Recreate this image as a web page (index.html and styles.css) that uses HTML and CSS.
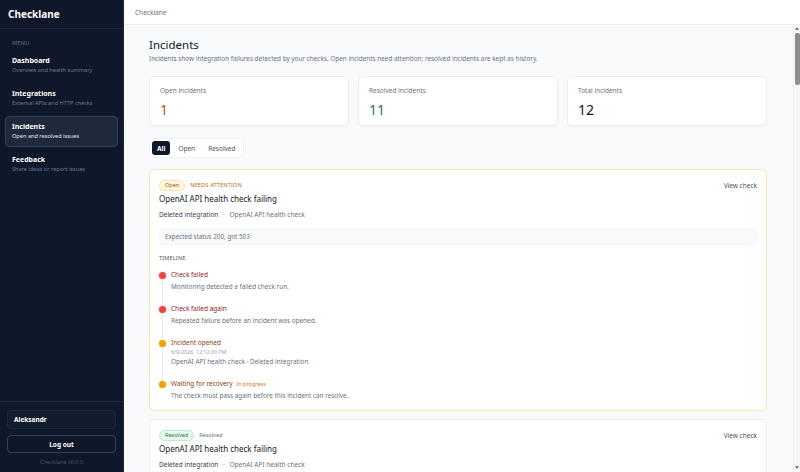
FILE: index.html
```html
<!DOCTYPE html>
<html lang="en">
<head>
    <meta charset="UTF-8">
    <meta name="viewport" content="width=device-width, initial-scale=1.0">
    <title>Incidents - Checklane</title>
    <link rel="stylesheet" href="styles.css">
</head>
<body>
    <aside class="sidebar">
        <div class="brand">Checklane</div>
        <div class="menu-label">MENU</div>
        <nav class="nav">
            <a class="nav-item" href="#">
                <span class="nav-title">Dashboard</span>
                <span class="nav-sub">Overview and health summary</span>
            </a>
            <a class="nav-item" href="#">
                <span class="nav-title">Integrations</span>
                <span class="nav-sub">External APIs and HTTP checks</span>
            </a>
            <a class="nav-item active" href="#">
                <span class="nav-title">Incidents</span>
                <span class="nav-sub">Open and resolved issues</span>
            </a>
            <a class="nav-item" href="#">
                <span class="nav-title">Feedback</span>
                <span class="nav-sub">Share ideas or report issues</span>
            </a>
        </nav>
        <div class="sidebar-footer">
            <div class="user-box">Aleksandr</div>
            <button class="logout-btn">Log out</button>
            <div class="version">Checklane v0.0.0</div>
        </div>
    </aside>

    <div class="main">
        <header class="topbar">Checklane</header>
        <main class="content">
            <h1>Incidents</h1>
            <p class="page-desc">Incidents show integration failures detected by your checks. Open incidents need attention; resolved incidents are kept as history.</p>

            <div class="stats">
                <div class="stat-card">
                    <div class="stat-label">Open incidents</div>
                    <div class="stat-value open">1</div>
                </div>
                <div class="stat-card">
                    <div class="stat-label">Resolved incidents</div>
                    <div class="stat-value resolved">11</div>
                </div>
                <div class="stat-card">
                    <div class="stat-label">Total incidents</div>
                    <div class="stat-value">12</div>
                </div>
            </div>

            <div class="tabs">
                <button class="tab active">All</button>
                <button class="tab">Open</button>
                <button class="tab">Resolved</button>
            </div>

            <div class="incident incident-open">
                <div class="incident-head">
                    <div class="badges">
                        <span class="badge badge-open">Open</span>
                        <span class="attention">NEEDS ATTENTION</span>
                    </div>
                    <a class="view-link" href="#">View check</a>
                </div>
                <div class="incident-title">OpenAI API health check failing</div>
                <div class="incident-meta"><strong>Deleted integration</strong> <span class="sep">·</span> OpenAI API health check</div>
                <div class="error-box">Expected status 200, got 503</div>

                <div class="timeline-label">TIMELINE</div>
                <ul class="timeline">
                    <li class="event fail">
                        <div class="event-title">Check failed</div>
                        <div class="event-desc">Monitoring detected a failed check run.</div>
                    </li>
                    <li class="event fail">
                        <div class="event-title">Check failed again</div>
                        <div class="event-desc">Repeated failure before an incident was opened.</div>
                    </li>
                    <li class="event warn">
                        <div class="event-title">Incident opened</div>
                        <div class="event-date">6/9/2026, 12:12:00 PM</div>
                        <div class="event-desc">OpenAI API health check · Deleted integration</div>
                    </li>
                    <li class="event warn">
                        <div class="event-title">Waiting for recovery <span class="progress">In progress</span></div>
                        <div class="event-desc">The check must pass again before this incident can resolve.</div>
                    </li>
                </ul>
            </div>

            <div class="incident">
                <div class="incident-head">
                    <div class="badges">
                        <span class="badge badge-resolved">Resolved</span>
                        <span class="resolved-note">Resolved</span>
                    </div>
                    <a class="view-link" href="#">View check</a>
                </div>
                <div class="incident-title">OpenAI API health check failing</div>
                <div class="incident-meta"><strong>Deleted integration</strong> <span class="sep">·</span> OpenAI API health check</div>
            </div>
        </main>
        <div class="scrollbar">
            <span class="scroll-arrow up"></span>
            <div class="scroll-thumb"></div>
            <span class="scroll-arrow down"></span>
        </div>
    </div>
</body>
</html>
```

FILE: styles.css
```css
* {
    box-sizing: border-box;
}

html, body {
    height: 100%;
}

body {
    margin: 0;
    display: flex;
    font-family: 'Noto Sans', sans-serif;
    background-color: #f8fafc;
    color: #111827;
    overflow: hidden;
}

/* Sidebar */
.sidebar {
    width: 124px;
    flex-shrink: 0;
    background-color: #0f172a;
    border-right: 1px solid #1e293b;
    color: #fff;
    display: flex;
    flex-direction: column;
}

.brand {
    height: 29px;
    padding: 0 8px;
    display: flex;
    align-items: center;
    font-size: 10px;
    font-weight: 700;
    border-bottom: 1px solid #1e293b;
}

.menu-label {
    padding: 10px 12px 0;
    font-size: 5.5px;
    line-height: 8px;
    letter-spacing: 0.3px;
    color: #64748b;
    margin-bottom: 3px;
}

.nav {
    display: flex;
    flex-direction: column;
    gap: 2px;
    padding: 0 5px;
}

.nav-item {
    display: flex;
    flex-direction: column;
    padding: 5px 6px;
    border: 1px solid transparent;
    border-radius: 4px;
    text-decoration: none;
    color: #fff;
}

.nav-item.active {
    background-color: #1e293b;
    border-color: #334155;
}

.nav-title {
    font-size: 7px;
    line-height: 10px;
    font-weight: 700;
}

.nav-sub {
    font-size: 5.6px;
    line-height: 9px;
    color: #6b7a90;
}

.nav-item.active .nav-sub {
    color: #e2e8f0;
}

.sidebar-footer {
    margin-top: auto;
    border-top: 1px solid #1e293b;
    padding: 8px 7px 5px;
    display: flex;
    flex-direction: column;
    gap: 6px;
}

.user-box {
    height: 19px;
    padding: 0 6px;
    display: flex;
    align-items: center;
    border: 1px solid #1e293b;
    border-radius: 4px;
    background-color: #111c30;
    font-size: 6.5px;
    font-weight: 700;
}

.logout-btn {
    height: 18px;
    border: 1px solid #334155;
    border-radius: 4px;
    background-color: #0f172a;
    color: #fff;
    font-family: inherit;
    font-size: 6.5px;
    font-weight: 700;
    cursor: pointer;
}

.version {
    text-align: center;
    font-size: 5.5px;
    line-height: 9px;
    color: #475569;
    margin-top: -1px;
}

/* Main */
.main {
    flex: 1;
    display: flex;
    flex-direction: column;
    min-width: 0;
    position: relative;
}

.topbar {
    height: 25px;
    flex-shrink: 0;
    padding: 0 11px;
    display: flex;
    align-items: center;
    background-color: #fff;
    border-bottom: 1px solid #eef0f3;
    font-size: 6.5px;
    color: #6b7280;
}

.content {
    flex: 1;
    overflow: hidden;
    padding: 12px 33px 20px 25px;
}

/* drawn scrollbar, the real one is hidden in screenshots */
.scrollbar {
    position: absolute;
    top: 25px;
    right: 0;
    bottom: 0;
    width: 7px;
    background-color: #f6f6f6;
    border-left: 1px solid #efefef;
}

.scroll-thumb {
    position: absolute;
    top: 8px;
    left: 1px;
    width: 5px;
    height: 52px;
    background-color: #8d8d8d;
    border-radius: 2px;
}

.scroll-arrow {
    position: absolute;
    left: 1px;
    width: 0;
    height: 0;
    border-left: 2.5px solid transparent;
    border-right: 2.5px solid transparent;
}

.scroll-arrow.up {
    top: 2px;
    border-bottom: 3px solid #777;
}

.scroll-arrow.down {
    bottom: 3px;
    border-top: 3px solid #777;
}

h1 {
    margin: 0;
    font-size: 11.5px;
    line-height: 16px;
    font-weight: 400;
}

.page-desc {
    margin: 1px 0 12px;
    font-size: 6.4px;
    line-height: 10px;
    color: #6b7280;
}

.stats {
    display: grid;
    grid-template-columns: repeat(3, 1fr);
    gap: 9px;
    margin-bottom: 12px;
}

.stat-card {
    height: 50px;
    padding: 9px 10px;
    background-color: #fff;
    border: 1px solid #eceef1;
    border-radius: 5px;
    box-shadow: 0 1px 2px rgba(0, 0, 0, 0.04);
}

.stat-label {
    font-size: 6.5px;
    line-height: 10px;
    color: #6b7280;
}

.stat-value {
    margin-top: 5px;
    font-size: 14px;
    line-height: 18px;
    color: #111827;
}

.stat-value.open {
    color: #b9531f;
}

.stat-value.resolved {
    color: #2d7a50;
}

.tabs {
    display: flex;
    width: fit-content;
    gap: 3px;
    padding: 2px;
    background-color: #fff;
    border: 1px solid #eef0f3;
    border-radius: 5px;
    margin-bottom: 11px;
}

.tab {
    height: 14px;
    padding: 0 5px;
    border: none;
    border-radius: 3px;
    background: none;
    font-family: inherit;
    font-size: 6.5px;
    color: #4b5563;
    cursor: pointer;
}

.tab.active {
    background-color: #0f172a;
    color: #fff;
    font-weight: 700;
}

/* Incident cards */
.incident {
    background-color: #fff;
    border: 1px solid #eceef1;
    border-radius: 5px;
    padding: 9px 9px 9px;
    margin-bottom: 8px;
}

.incident-open {
    border-color: #f8e7b5;
}

.incident-head {
    display: flex;
    justify-content: space-between;
    align-items: center;
    height: 12px;
}

.badges {
    display: flex;
    align-items: center;
    gap: 5px;
}

.badge {
    height: 11px;
    padding: 0 5px;
    display: inline-flex;
    align-items: center;
    border-radius: 6px;
    font-size: 5.5px;
}

.badge-open {
    background-color: #fef7e0;
    border: 1px solid #fbe3a6;
    color: #b45309;
}

.badge-resolved {
    background-color: #e9f8ef;
    border: 1px solid #bfe9d0;
    color: #1f7a4f;
}

.attention {
    font-size: 5.5px;
    letter-spacing: 0.2px;
    color: #c2680c;
}

.resolved-note {
    font-size: 5.5px;
    color: #6b7280;
}

.view-link {
    font-size: 6.5px;
    color: #4b5563;
    text-decoration: none;
}

.incident-title {
    margin-top: 2px;
    font-size: 8px;
    line-height: 12px;
    color: #111827;
}

.incident-meta {
    margin-top: 5px;
    font-size: 6.5px;
    line-height: 10px;
    color: #6b7280;
}

.incident-meta strong {
    font-weight: 400;
    color: #374151;
}

.sep {
    margin: 0 3px;
    color: #9ca3af;
}

.error-box {
    margin-top: 8px;
    height: 17px;
    padding: 0 6px;
    display: flex;
    align-items: center;
    background-color: #f8f9fb;
    border-radius: 4px;
    font-size: 6.3px;
    color: #6b7280;
}

.timeline-label {
    margin-top: 8px;
    font-size: 5.5px;
    line-height: 10px;
    letter-spacing: 0.2px;
    color: #4b5563;
}

.timeline {
    list-style: none;
    margin: 7px 0 0;
    padding: 0;
    position: relative;
}

.timeline::before {
    content: '';
    position: absolute;
    left: 3px;
    top: 5px;
    bottom: 16px;
    width: 1px;
    background-color: #e5e7eb;
}

.event {
    position: relative;
    padding-left: 12px;
    margin-bottom: 12px;
}

.event:last-child {
    margin-bottom: 0;
}

.event::before {
    content: '';
    position: absolute;
    left: 0;
    top: 1.5px;
    width: 7px;
    height: 7px;
    border-radius: 50%;
    background-color: #ef4444;
    box-shadow: 0 0 0 1px #fde2e2;
}

.event.warn::before {
    background-color: #f59e0b;
    box-shadow: 0 0 0 1px #fdefd0;
}

.event-title {
    font-size: 6.5px;
    line-height: 10px;
    color: #8b1e2b;
}

.event.warn .event-title {
    color: #92400e;
}

.progress {
    margin-left: 2px;
    font-size: 5.5px;
    color: #d97706;
}

.event-date {
    font-size: 5.3px;
    line-height: 9px;
    color: #9ca3af;
}

.event-desc {
    margin-top: 2px;
    font-size: 6.4px;
    line-height: 10px;
    color: #6b7280;
}

.event-date + .event-desc {
    margin-top: 0;
}
```
